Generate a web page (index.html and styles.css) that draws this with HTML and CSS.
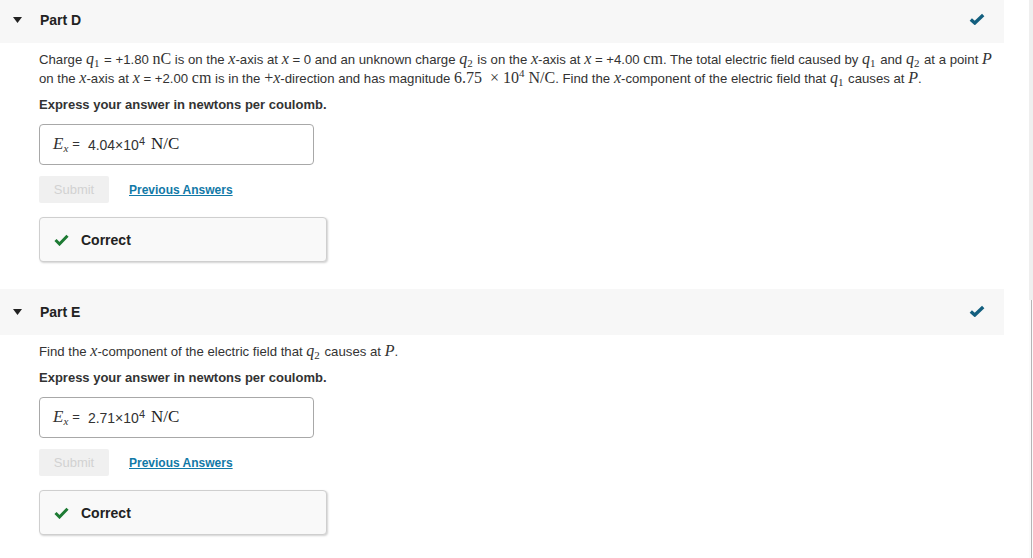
FILE: index.html
```html
<!DOCTYPE html>
<html>
<head>
<meta charset="utf-8">
<link rel="stylesheet" href="styles.css">
</head>
<body>
<div class="layout">
  <main class="page">
    <section class="part">
      <header class="part-head">
        <svg class="caret" width="9" height="6" viewBox="0 0 9 6"><path d="M0 0 H9 L4.5 6 Z" fill="#222"/></svg>
        <span class="part-title">Part D</span>
        <svg class="done" width="16" height="12" viewBox="0 0 16 12"><path d="M1.8 6.4 L5.8 10 L14.2 2" fill="none" stroke="#135f7f" stroke-width="3.4"/></svg>
      </header>
      <div class="part-body">
        <p class="q">Charge <span class="mi">q</span><sub class="ms">1</sub> = +1.80 <span class="mr">nC</span> is on the <span class="mi">x</span>-axis at <span class="mi">x</span> = 0 and an unknown charge <span class="mi">q</span><sub class="ms">2</sub> is on the <span class="mi">x</span>-axis at <span class="mi">x</span> = +4.00 <span class="mr">cm</span>. The total electric field caused by <span class="mi">q</span><sub class="ms">1</sub> and <span class="mi">q</span><sub class="ms">2</sub> at a point <span class="mi">P</span><br>on the <span class="mi">x</span>-axis at <span class="mi">x</span> = +2.00 <span class="mr">cm</span> is in the <span class="mr">+</span><span class="mi">x</span>-direction and has magnitude <span class="mr">6.75 &nbsp;× 10<sup class="msup">4</sup> N/C</span>. Find the <span class="mi">x</span>-component of the electric field that <span class="mi">q</span><sub class="ms">1</sub> causes at <span class="mi">P</span>.</p>
        <p class="instr">Express your answer in newtons per coulomb.</p>
        <div class="answer">
          <span class="mi big">E</span><sub class="esub">x</sub><span class="eq">=</span>
          <span class="val">4.04×10<sup>4</sup></span>
          <span class="unit">N/C</span>
        </div>
        <div class="actions">
          <button class="submit" disabled>Submit</button>
          <a class="prev" href="#">Previous Answers</a>
        </div>
        <div class="result">
          <svg class="ok" width="15" height="12" viewBox="0 0 15 12"><path d="M1.5 6 L5.5 10 L13.5 1.8" fill="none" stroke="#1e7b34" stroke-width="3"/></svg>
          <span>Correct</span>
        </div>
      </div>
    </section>

    <section class="part">
      <header class="part-head">
        <svg class="caret" width="9" height="6" viewBox="0 0 9 6"><path d="M0 0 H9 L4.5 6 Z" fill="#222"/></svg>
        <span class="part-title">Part E</span>
        <svg class="done" width="16" height="12" viewBox="0 0 16 12"><path d="M1.8 6.4 L5.8 10 L14.2 2" fill="none" stroke="#135f7f" stroke-width="3.4"/></svg>
      </header>
      <div class="part-body">
        <p class="q">Find the <span class="mi">x</span>-component of the electric field that <span class="mi">q</span><sub class="ms">2</sub> causes at <span class="mi">P</span>.</p>
        <p class="instr">Express your answer in newtons per coulomb.</p>
        <div class="answer">
          <span class="mi big">E</span><sub class="esub">x</sub><span class="eq">=</span>
          <span class="val">2.71×10<sup>4</sup></span>
          <span class="unit">N/C</span>
        </div>
        <div class="actions">
          <button class="submit" disabled>Submit</button>
          <a class="prev" href="#">Previous Answers</a>
        </div>
        <div class="result">
          <svg class="ok" width="15" height="12" viewBox="0 0 15 12"><path d="M1.5 6 L5.5 10 L13.5 1.8" fill="none" stroke="#1e7b34" stroke-width="3"/></svg>
          <span>Correct</span>
        </div>
      </div>
    </section>
  </main>
  <div class="edge">
    <div class="edge-top"></div>
    <div class="edge-bottom"></div>
  </div>
</div>
</body>
</html>
```

FILE: styles.css
```css
* { box-sizing: border-box; }
html, body { margin: 0; padding: 0; background: #fff; }
body {
  font-family: "Liberation Sans", Arial, sans-serif;
  font-size: 13px;
  color: #333;
  overflow: hidden;
}
.layout {
  display: flex;
  height: 558px;
}
.page {
  width: 1004px;
  flex: 0 0 1004px;
  margin-top: -3px;
}
.edge {
  margin-left: auto;
  width: 4px;
  display: flex;
  flex-direction: column;
}
.edge-top {
  height: 300px;
  background: #efefef;
}
.edge-bottom {
  flex: 1;
  border-left: 2px solid #fafafa;
  border-right: 1px solid #fafafa;
  background: #b5b5b5;
}
.part-head {
  height: 46px;
  background: #f7f7f7;
  display: flex;
  align-items: center;
  padding: 0 19px 0 13px;
  font-size: 14px;
}
.caret { display: block; }
.part-title {
  margin-left: 18px;
  font-weight: bold;
  color: #222;
}
.done { margin-left: auto; display: block; margin-top: -2px; }
.part-body {
  padding: 7px 0 27px 39px;
}
.q {
  margin: 0 0 7px;
  line-height: 19px;
  white-space: nowrap;
  font-size: 13.2px;
}
.mi {
  font-family: "Liberation Serif", "Times New Roman", serif;
  font-style: italic;
  font-size: 16px;
  line-height: 1;
}
.mr {
  font-family: "Liberation Serif", "Times New Roman", serif;
  font-size: 16px;
  line-height: 1;
}
.ms {
  font-family: "Liberation Serif", "Times New Roman", serif;
  font-size: 11px;
  vertical-align: -3px;
  line-height: 0;
  margin-right: 1px;
}
.msup {
  font-size: 11px;
  vertical-align: 6px;
  line-height: 0;
}
.instr {
  margin: 0 0 10px;
  line-height: 19px;
  font-weight: bold;
}
.answer {
  width: 275px;
  height: 41px;
  border: 1px solid #a8a8a8;
  border-radius: 4px;
  display: flex;
  align-items: center;
  padding-left: 13px;
  padding-bottom: 2px;
  margin-bottom: 11px;
}
.answer .big { font-size: 17px; }
.esub {
  font-family: "Liberation Serif", "Times New Roman", serif;
  font-style: italic;
  font-size: 11px;
  align-self: center;
  margin-top: 9px;
  line-height: 0;
}
.eq { margin-left: 4px; font-size: 13px; }
.val {
  margin-left: 8px;
  font-size: 14px;
  color: #333;
  margin-top: 3px;
}
.val sup {
  font-size: 11px;
  vertical-align: 5px;
  line-height: 0;
}
.unit {
  margin-left: 6px;
  font-family: "Liberation Serif", "Times New Roman", serif;
  font-size: 17px;
  color: #222;
}
.actions {
  display: flex;
  align-items: center;
  height: 27px;
  margin-bottom: 14px;
}
.submit {
  width: 70px;
  height: 27px;
  border: none;
  border-radius: 2px;
  background: #f0f0f0;
  color: #d2d2d2;
  font-family: "Liberation Sans", Arial, sans-serif;
  font-size: 13px;
  padding: 0;
}
.prev {
  margin-left: 20px;
  font-size: 12px;
  font-weight: bold;
  color: #1179a7;
  text-decoration: underline;
}
.result {
  width: 288px;
  height: 45px;
  border: 1px solid #cfcfcf;
  border-radius: 4px;
  background: #f9f9f9;
  box-shadow: 1px 1px 2px rgba(0,0,0,0.18);
  display: flex;
  align-items: center;
  padding-left: 14px;
  font-weight: bold;
  font-size: 14px;
  color: #222;
}
.ok { display: block; margin-right: 12px; }
```
